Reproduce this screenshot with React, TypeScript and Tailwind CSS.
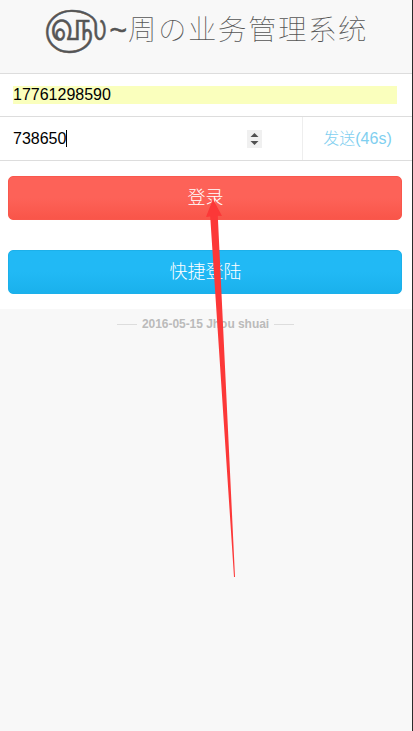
export default function App() {
  return (
    <div className="relative flex h-[731px] w-[413px] flex-col overflow-hidden border-r border-[#2b2b2b] bg-[#f8f8f8] font-['Liberation_Sans','Noto_Sans_CJK_SC',sans-serif] text-black">
      <header className="flex h-[74px] shrink-0 items-start border-b border-[#dddddd] pl-[44px] text-[30px] leading-[60px] text-[#555555]">
        <span className="w-[65px] origin-center -translate-y-[4px] scale-y-[1.18] text-[36px] [-webkit-text-stroke:0.5px_#555555]">௵</span>
        <span className="w-[19px] translate-x-[0.5px] [-webkit-text-stroke:0.6px_#555555]">~</span>
        <h1 className="-mt-[2px] whitespace-nowrap font-['Noto_Sans_CJK_SC',sans-serif] text-[28.5px] font-thin tracking-[1.5px]">周の业务管理系统</h1>
      </header>

      <main className="h-[235px] shrink-0 bg-white">
        <div className="flex h-[43px] items-center border-b border-[#dddddd] pr-[15px] pl-[13px] text-base">
          <div className="h-[18px] w-full bg-[#faffbd] leading-[18px]">17761298590</div>
        </div>
        <div className="flex h-11 border-b border-[#dddddd] text-base">
          <div className="flex w-[302px] items-center pr-10 pl-[13px]">
            <span className="leading-[18px]">738650</span>
            <span className="h-[17px] w-px bg-black" />
            <span className="ml-auto flex h-[18px] w-[15px] items-center justify-center bg-[#f0f0f0]">
              <svg width="15" height="18" viewBox="0 0 15 18" fill="#505050">
                <path d="M3.5 7 7.5 3l4 4zM3.5 11l4 4 4-4z" />
              </svg>
            </span>
          </div>
          <div className="flex flex-1 items-center justify-center border-l border-[#eeeeee] pt-px font-light text-[#7fcff0]">
            发送(46s)
          </div>
        </div>
        <div className="flex flex-col gap-[30px] pt-[15px] pr-[10px] pl-2 text-lg font-light text-white">
          <button className="h-11 rounded-[5px] border border-[#f9574c] bg-linear-to-b from-[#fd6258] from-50% to-[#f95549] pl-px">登录</button>
          <button className="h-11 rounded-[5px] border border-[#1cb0ea] bg-linear-to-b from-[#21b9f5] from-50% to-[#1ab1ec] pl-px">快捷登陆</button>
        </div>
      </main>

      <footer className="flex h-[30px] items-center justify-center gap-[5px] pr-px text-xs font-bold text-[#bbbbbb]">
        <span className="h-px w-5 bg-[#dddddd]" />
        <span className="tracking-[-0.04px]">2016-05-15 Jhou shuai</span>
        <span className="h-px w-5 bg-[#dddddd]" />
      </footer>

      <svg className="absolute top-[190px] left-[200px]" width="50" height="390" viewBox="200 190 50 390" fill="#fc3838">
        <path d="M213 199 222 216 217.8 215.8 235 577 234 577 210.2 216.5 206 217z" />
      </svg>
    </div>
  );
}
